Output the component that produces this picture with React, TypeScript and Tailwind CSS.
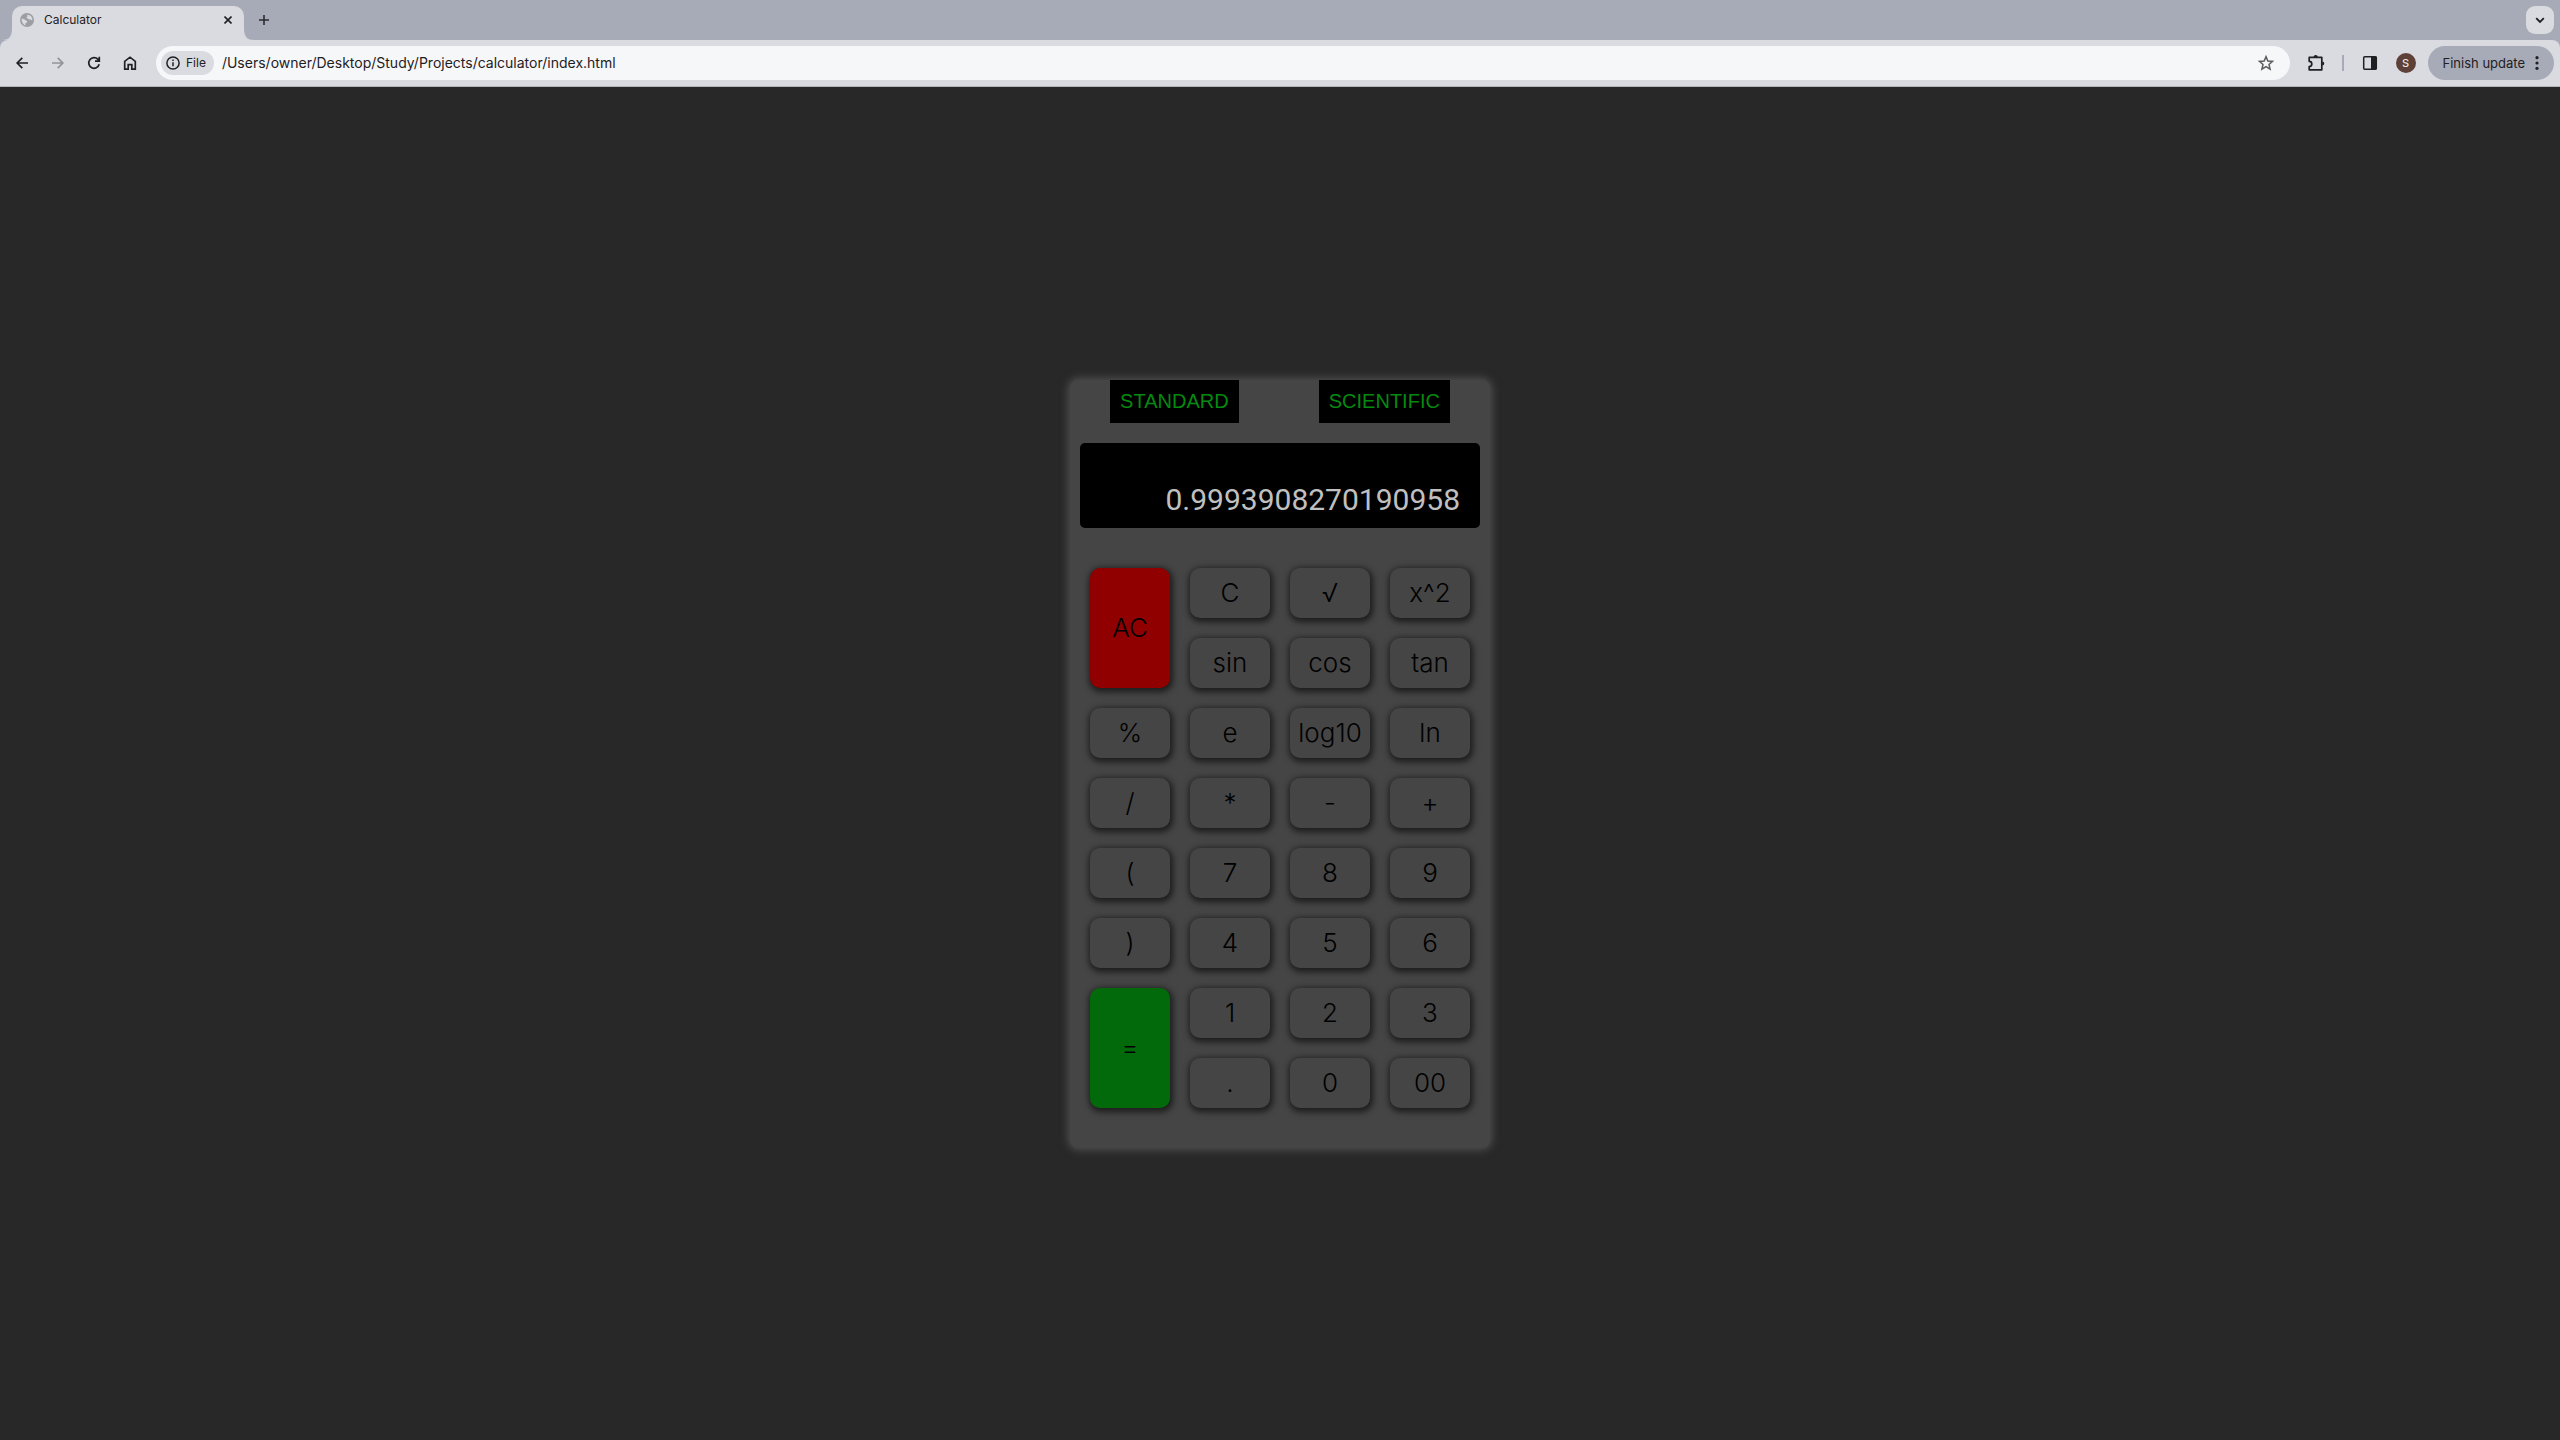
import React from "react";

type KeyDef = { label: string; tall?: "red" | "green" };

const keys: KeyDef[] = [
  { label: "AC", tall: "red" }, { label: "C" }, { label: "√" }, { label: "x^2" },
  { label: "sin" }, { label: "cos" }, { label: "tan" },
  { label: "%" }, { label: "e" }, { label: "log10" }, { label: "ln" },
  { label: "/" }, { label: "*" }, { label: "-" }, { label: "+" },
  { label: "(" }, { label: "7" }, { label: "8" }, { label: "9" },
  { label: ")" }, { label: "4" }, { label: "5" }, { label: "6" },
  { label: "=", tall: "green" }, { label: "1" }, { label: "2" }, { label: "3" },
  { label: "." }, { label: "0" }, { label: "00" },
];

const keyBase =
  "flex items-center justify-center rounded-[10px] font-['Inter','Liberation_Sans',sans-serif] text-[26px] font-light leading-8 text-black shadow-[1px_2px_6px_2px_rgba(0,0,0,0.6)]";

function Key({ label, tall }: KeyDef) {
  const tone =
    tall === "red"
      ? "row-span-2 bg-[#900000]"
      : tall === "green"
        ? "row-span-2 bg-[#036a0b]"
        : "bg-[#454545]";
  return <button type="button" className={`${keyBase} ${tone}`}>{label}</button>;
}

function Calculator() {
  return (
    <section
      aria-label="Calculator"
      className="w-full max-w-[420px] rounded-[8px] bg-[#454545] pb-10 font-['Liberation_Sans',sans-serif] shadow-[0_0_8px_2px_rgba(90,90,90,0.8)]"
    >
      <div className="flex justify-around">
        <button type="button" className="bg-black p-2.5 text-[20px] leading-[23px] text-[#058a10]">STANDARD</button>
        <button type="button" className="bg-black p-2.5 text-[20px] leading-[23px] text-[#058a10]">SCIENTIFIC</button>
      </div>
      <div className="px-2.5 pt-5">
        <input
          aria-label="Result"
          readOnly
          value="0.9993908270190958"
          className="block h-[85px] w-full rounded-[5px] bg-black pt-7 pr-5 text-right font-['Roboto',sans-serif] text-[30px] leading-10 text-[#c0c0c0] outline-none"
        />
      </div>
      <div className="mt-10 grid auto-rows-[50px] grid-cols-4 gap-5 px-5">
        {keys.map((k) => <Key key={k.label} {...k} />)}
      </div>
    </section>
  );
}

const stroke = { fill: "none", stroke: "currentColor", strokeWidth: 2 } as const;

function NavButton({ label, dim, children }: { label: string; dim?: boolean; children: React.ReactNode }) {
  return (
    <button type="button" aria-label={label} className={`flex size-9 items-center justify-center ${dim ? "text-[#929398]" : "text-[#1f2023]"}`}>
      {children}
    </button>
  );
}

function TabStrip() {
  return (
    <div className="flex h-10 items-end bg-[#a7abb7] pr-1.5">
      <svg className="h-[10px] w-3 shrink-0 text-[#dadbe0]" viewBox="0 0 12 10" aria-hidden="true">
        <path d="M12 0v10H2Q12 10 12 0Z" fill="currentColor" />
      </svg>
      <div className="flex h-[34px] w-[232px] items-center rounded-t-[10px] bg-[#dadbe0] px-2 pb-1.5 text-[#1f2023]">
        <svg width="14" height="14" viewBox="0 0 14 14" aria-hidden="true">
          <circle cx="7" cy="7" r="7" fill="#9b9fa3" />
          <path d="M1.600 5.800l2.400.2 1.400 1.200 1.800.8-.2 1.400-1.400.6-.4 2.400C3.200 11.600 1.500 9.200 1.600 5.800ZM8.400 1.800L7 2.600l.6 1-1.400 1 1.600.8 1 1.200 1.400-.4.8 1 1.400-.4C12.400 4.400 10.600 2.300 8.400 1.800Z" fill="#dadbe0" />
        </svg>
        <span className="ml-2.5 flex-1 font-['Inter',sans-serif] text-[12px] leading-4">Calculator</span>
        <button type="button" aria-label="Close tab" className="flex size-4 items-center justify-center">
          <svg width="8" height="8" viewBox="0 0 8 8"><path d="M.5.5l7 7M7.500.5l-7 7" {...stroke} strokeWidth={1.600} /></svg>
        </button>
      </div>
      <svg className="h-[10px] w-3 shrink-0 text-[#dadbe0]" viewBox="0 0 12 10" aria-hidden="true">
        <path d="M0 0v10H10Q0 10 0 0Z" fill="currentColor" />
      </svg>
      <button type="button" aria-label="New tab" className="mb-3 flex size-4 items-center justify-center text-[#2c2d31]">
        <svg width="10" height="10" viewBox="0 0 10 10"><path d="M5 0v10M0 5h10" {...stroke} strokeWidth={1.600} /></svg>
      </button>
      <button type="button" aria-label="Search tabs" className="mb-1.5 ml-auto flex size-7 items-center justify-center rounded-[9px] bg-[#dadbe0] text-[#1f2023]">
        <svg width="10" height="7" viewBox="0 0 10 7"><path d="M1.200 1.200L5 5l3.800-3.800" {...stroke} strokeWidth={1.900} /></svg>
      </button>
    </div>
  );
}

function Toolbar() {
  return (
    <div className="bg-[#a7abb7]">
      <div className="flex h-[47px] items-center rounded-t-[8px] border-b border-[#b4b5ba] bg-[#dadbe0] pl-1 pr-1.5 font-['Inter',sans-serif] text-[#1f2023]">
        <NavButton label="Back">
          <svg width="12" height="12" viewBox="0 0 12 12"><path d="M12 6H1.200M6.300.8L1.100 6l5.200 5.200" {...stroke} strokeWidth={1.700} /></svg>
        </NavButton>
        <NavButton label="Forward" dim>
          <svg width="12" height="12" viewBox="0 0 12 12"><path d="M0 6h10.800M5.700.8L10.900 6l-5.200 5.200" {...stroke} strokeWidth={1.700} /></svg>
        </NavButton>
        <NavButton label="Reload">
          <svg width="14" height="14" viewBox="0 0 14 14"><path d="M12.200 8.300A5.300 5.300 0 1 1 11 3.400L12.400 4.900M12.300.8v4.400H8" {...stroke} strokeWidth={1.700} /></svg>
        </NavButton>
        <NavButton label="Home">
          <svg width="14" height="14" viewBox="0 0 14 14"><path d="M1.700 13.100V5.300L7 1.200l5.300 4.100v7.800H8.800V8.600H5.200v4.500Z" {...stroke} strokeWidth={1.700} /></svg>
        </NavButton>
        <div className="ml-2 flex h-[34px] flex-1 items-center rounded-full bg-[#f6f7f9] pl-[5px] pr-3.5">
          <button type="button" className="flex h-6 items-center gap-1.5 rounded-full bg-[#dadbe0] pl-[5px] pr-2 text-[12px] leading-4">
            <svg width="14" height="14" viewBox="0 0 14 14" aria-hidden="true">
              <circle cx="7" cy="7" r="6.100" {...stroke} strokeWidth={1.500} />
              <path d="M7 6.300v4M7 3.500v1.500" {...stroke} strokeWidth={1.500} />
            </svg>
            File
          </button>
          <input
            aria-label="Address"
            defaultValue="/Users/owner/Desktop/Study/Projects/calculator/index.html"
            className="ml-2 min-w-0 flex-1 bg-transparent text-[14px] leading-5 outline-none"
          />
          <button type="button" aria-label="Bookmark this tab" className="text-[#5b5c60]">
            <svg width="20" height="20" viewBox="0 0 24 24"><path d="M12 4.400l2.200 5.200 5.600.5-4.200 3.700 1.300 5.500L12 16.400l-4.900 2.900 1.300-5.500-4.200-3.700 5.600-.5Z" {...stroke} strokeWidth={1.800} /></svg>
          </button>
        </div>
        <button type="button" aria-label="Extensions" className="ml-4 flex size-5 items-center justify-center">
          <svg width="18" height="18" viewBox="0 0 18 18">
            <path d="M2.200 3.400h12.600v12.400H2.200v-3.300a2.600 2.600 0 0 0 0-5.200Z" {...stroke} strokeWidth={1.700} strokeLinejoin="round" />
            <path d="M6.600 3a2.100 2.100 0 0 1 4.200 0ZM15.200 7.400a2.100 2.100 0 0 1 0 4.200Z" fill="currentColor" />
          </svg>
        </button>
        <span className="ml-4 h-4 w-0.5 bg-[#a7abb7]" />
        <button type="button" aria-label="Side panel" className="ml-4 flex size-5 items-center justify-center">
          <svg width="16" height="16" viewBox="0 0 16 16">
            <rect x="1.700" y="1.700" width="12.600" height="12.600" rx="1" {...stroke} strokeWidth={1.500} />
            <path d="M9 1.500h5.500v13H9Z" fill="currentColor" />
          </svg>
        </button>
        <button type="button" aria-label="Profile" className="ml-4 flex size-5 items-center justify-center rounded-full bg-[#5d4037] text-[11px] font-medium leading-4 text-[#e9e3e1]">S</button>
        <button type="button" className="ml-3 flex h-[34px] items-center gap-2.5 rounded-full bg-[#a7abb7] px-[15px] text-[13px] leading-4">
          Finish update
          <svg width="4" height="14" viewBox="0 0 4 14" aria-hidden="true">
            <circle cx="2" cy="1.700" r="1.600" fill="currentColor" />
            <circle cx="2" cy="7" r="1.600" fill="currentColor" />
            <circle cx="2" cy="12.300" r="1.600" fill="currentColor" />
          </svg>
        </button>
      </div>
    </div>
  );
}

export default function App() {
  return (
    <div className="flex min-h-screen flex-col bg-[#282828]">
      <header>
        <TabStrip />
        <Toolbar />
      </header>
      <main className="flex flex-1 items-center justify-center">
        <Calculator />
      </main>
    </div>
  );
}
